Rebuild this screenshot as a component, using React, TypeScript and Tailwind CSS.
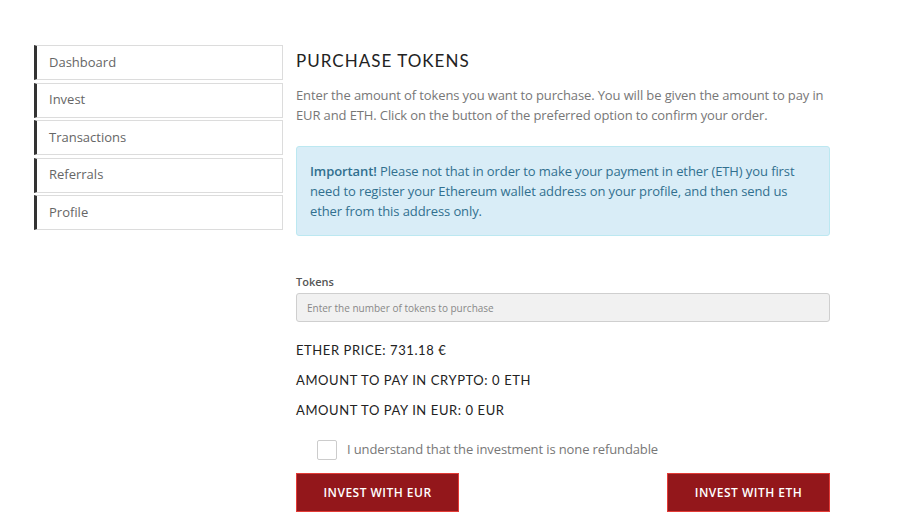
import { useState } from 'react';

const nav = ['Dashboard', 'Invest', 'Transactions', 'Referrals', 'Profile'];

export default function App() {
  const [tokens, setTokens] = useState('');
  const [agree, setAgree] = useState(false);

  return (
    <div className="min-h-[531px] w-[900px] bg-white font-['Open_Sans',sans-serif]">
      <div className="flex gap-[13px] pl-[34px] pt-[45px]">
        {/* side menu */}
        <div className="flex w-[249px] flex-col gap-[2.5px]">
          {nav.map((n) => (
            <div
              key={n}
              className="flex h-[35px] items-center border border-l-[3px] border-[#dcdcdc] border-l-[#333] pl-[12px] text-[13px] text-[#666]"
            >
              {n}
            </div>
          ))}
        </div>

        {/* main */}
        <div className="w-[534px]">
          <h2 className="pt-[5px] font-['Lato',sans-serif] text-[17px] leading-[22px] tracking-[0.06em] text-[#222]">
            PURCHASE TOKENS
          </h2>
          <p className="mt-[14px] text-[13px] leading-[19.5px] tracking-[-0.12px] text-[#777]">
            Enter the amount of tokens you want to purchase. You will be given the amount to pay in EUR and ETH. Click on
            the button of the preferred option to confirm your order.
          </p>

          <div className="mt-[21px] rounded-[3px] border border-[#bce8f1] bg-[#d9edf7] px-[13px] py-[14px] text-[13px] leading-[20px] tracking-[-0.1px] text-[#31708f]">
            <b className="font-semibold">Important!</b> Please not that in order to make your payment in ether (ETH) you
            first need to register your Ethereum wallet address on your profile, and then send us ether from this
            address only.
          </div>

          <label className="mt-[38px] block text-[11px] font-semibold leading-[16px] text-[#555]">Tokens</label>
          <input
            value={tokens}
            onChange={(e) => setTokens(e.target.value)}
            placeholder="Enter the number of tokens to purchase"
            className="mt-[3px] h-[29px] w-full rounded-[3px] border border-[#cfcfcf] bg-[#f1f1f1] px-[10px] text-[10px] text-[#555] outline-none placeholder:text-[#888]"
          />

          <div className="mt-[19px] flex flex-col gap-[11px] font-['Lato',sans-serif] text-[13px] leading-[19px] tracking-[0.045em] text-[#222]">
            <div>ETHER PRICE: 731.18 €</div>
            <div>AMOUNT TO PAY IN CRYPTO: 0 ETH</div>
            <div>AMOUNT TO PAY IN EUR: 0 EUR</div>
          </div>

          <label className="mt-[20px] flex items-center gap-[10px] pl-[21px]">
            <input
              type="checkbox"
              checked={agree}
              onChange={(e) => setAgree(e.target.checked)}
              className="h-[20px] w-[20px] appearance-none rounded-[2px] border border-[#cccccc] bg-white checked:bg-[#931a1e]"
            />
            <span className="text-[13px] tracking-[-0.12px] text-[#777]">
              I understand that the investment is none refundable
            </span>
          </label>

          <div className="mt-[13px] flex justify-between">
            <button className="h-[39px] w-[163px] border border-[#e33b36] bg-[#93171b] text-[12px] font-semibold tracking-[0.04em] text-white">
              INVEST WITH EUR
            </button>
            <button className="h-[39px] w-[163px] border border-[#e33b36] bg-[#93171b] text-[12px] font-semibold tracking-[0.04em] text-white">
              INVEST WITH ETH
            </button>
          </div>
        </div>
      </div>
    </div>
  );
}
